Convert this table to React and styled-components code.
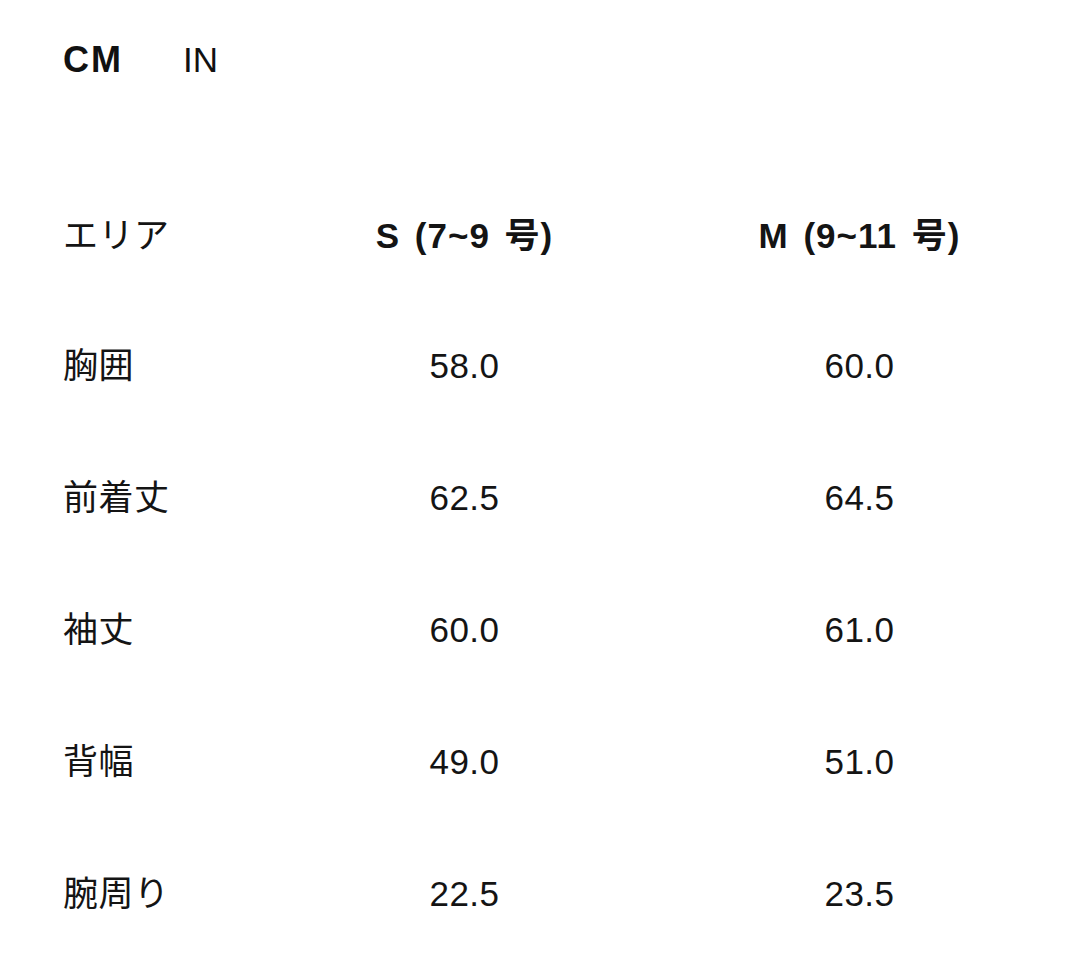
import React, { useState } from 'react';
import styled, { createGlobalStyle } from 'styled-components';

const GlobalStyle = createGlobalStyle`
body {
    margin: 0;
    background: #ffffff;
    font-family: "Liberation Sans", "Noto Sans CJK JP", sans-serif;
    color: #111111;
}
`

const rows = [
    { area: "胸囲", s: "58.0", m: "60.0" },
    { area: "前着丈", s: "62.5", m: "64.5" },
    { area: "袖丈", s: "60.0", m: "61.0" },
    { area: "背幅", s: "49.0", m: "51.0" },
    { area: "腕周り", s: "22.5", m: "23.5" },
];

export default function App() {
    const [unit, setUnit] = useState("CM");

    return (
        <Container>
            <GlobalStyle />
            <Units>
                {["CM", "IN"].map(u => (
                    <Unit key={u} active={u === unit} onClick={() => setUnit(u)}>{u}</Unit>
                ))}
            </Units>

            <Table>
                <HeadRow>
                    <Cell>エリア</Cell>
                    <Cell center bold>S (7~9 号)</Cell>
                    <Cell center bold>M (9~11 号)</Cell>
                </HeadRow>
                {rows.map(r => (
                    <Row key={r.area}>
                        <Cell>{r.area}</Cell>
                        <Cell center>{r.s}</Cell>
                        <Cell center>{r.m}</Cell>
                    </Row>
                ))}
            </Table>
        </Container>
    )
}

const Container = styled.div`
    padding: 40px 0 0 63px;
`

const Units = styled.div`
display: flex;
gap: 60px;
height: 40px;
align-items: center;
`
const Unit = styled.div`
font-size: ${p => p.active ? '36px' : '35px'};
line-height: 40px;
letter-spacing: ${p => p.active ? '2px' : '0'};
font-weight: ${p => p.active ? 700 : 400};
color: #111111;
cursor: pointer;
`

const Table = styled.div`
    margin-top: 91px;
`
const Row = styled.div`
display: grid;
grid-template-columns: 204px 395px 395px;
align-items: center;
height: 132px;
`
const HeadRow = styled(Row)`
height: 129px;
`
const Cell = styled.div`
font-size: 35px;
line-height: 40px;
text-align: ${p => p.center ? 'center' : 'left'};
font-weight: ${p => p.bold ? 700 : 400};
letter-spacing: ${p => p.bold ? '1px' : '0.5px'};
word-spacing: ${p => p.bold ? '4px' : '0'};
color: #141414;
white-space: nowrap;
`
